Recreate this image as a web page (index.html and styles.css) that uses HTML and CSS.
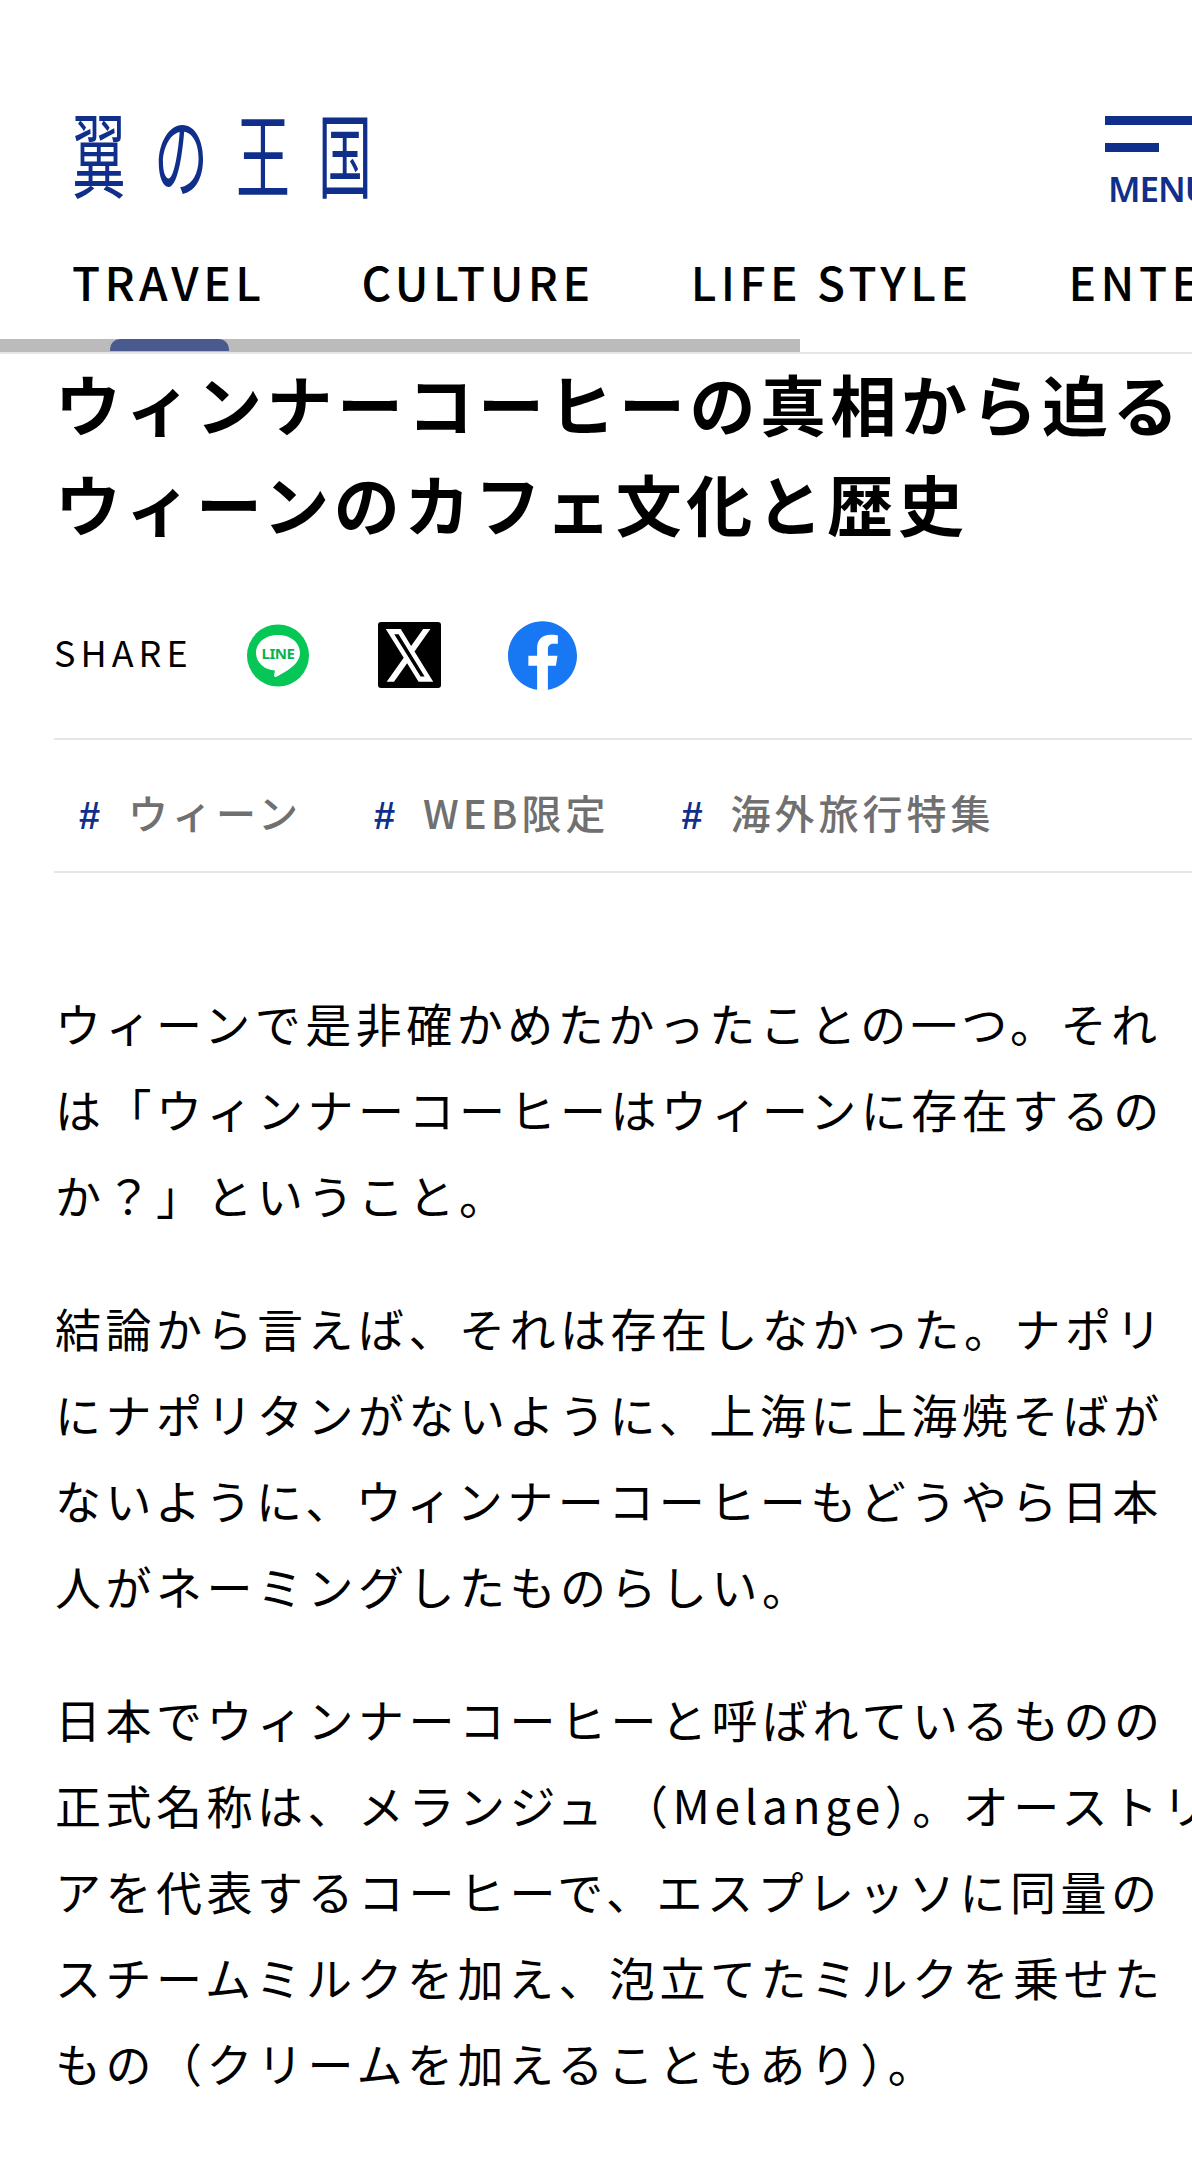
FILE: index.html
```html
<!DOCTYPE html>
<html lang="ja">
<head>
    <meta charset="UTF-8">
    <meta name="viewport" content="width=device-width, initial-scale=1.0">
    <title>ウィンナーコーヒーの真相から迫るウィーンのカフェ文化と歴史</title>
    <link rel="stylesheet" href="styles.css">
</head>
<body>

    <header class="site-header">
        <div class="logo-row">
            <a class="logo" href="#">翼の王国</a>
            <div class="menu-button">
                <span class="menu-bar"></span>
                <span class="menu-bar short"></span>
                <span class="menu-label">MENU</span>
            </div>
        </div>
        <nav class="main-nav">
            <a href="#">TRAVEL</a>
            <a href="#">CULTURE</a>
            <a href="#">LIFE STYLE</a>
            <a href="#">ENTERTAINMENT</a>
        </nav>
        <div class="nav-track"><span class="nav-thumb"></span></div>
    </header>

    <main class="article">
        <h1>ウィンナーコーヒーの真相から迫る<br>ウィーンのカフェ文化と歴史</h1>

        <div class="share">
            <span class="share-label">SHARE</span>
            <!-- LINE -->
            <a class="share-icon line" href="#">
                <svg viewBox="0 0 62 63" width="62" height="63">
                    <circle cx="31" cy="31.500" r="31" fill="#06c755"/>
                    <path d="M31 11C18.500 11 9 18.500 9 29c0 10 9 17 19 17.500l-1 5c0 1.500 1.500 1.800 3 1 5-3 23-11 23-23.500C53 18.500 43.500 11 31 11z" fill="#fff"/>
                    <text x="31" y="35" text-anchor="middle" class="line-text">LINE</text>
                </svg>
            </a>
            <!-- X -->
            <a class="share-icon x" href="#">
                <svg viewBox="0 0 63 66" width="63" height="66">
                    <rect width="63" height="66" rx="3" fill="#000"/>
                    <path transform="translate(5 1) scale(2.200 2.700)" d="M18.244 2.250h3.308l-7.227 8.260 8.502 11.240H16.170l-5.214-6.817L4.990 21.750H1.680l7.730-8.835L1.254 2.250H8.080l4.713 6.231zm-1.161 17.520h1.833L7.084 4.126H5.117z" fill="#fff"/>
                </svg>
            </a>
            <!-- Facebook -->
            <a class="share-icon fb" href="#">
                <svg viewBox="0 0 24 24" preserveAspectRatio="none" width="69" height="69">
                    <path d="M24 12.073c0-6.627-5.373-12-12-12s-12 5.373-12 12c0 5.990 4.388 10.954 10.125 11.854v-8.385H7.078v-3.470h3.047V9.430c0-3.007 1.792-4.669 4.533-4.669 1.312 0 2.686.235 2.686.235v2.953H15.830c-1.491 0-1.956.925-1.956 1.874v2.250h3.328l-.532 3.470h-2.796v8.385C19.612 23.027 24 18.062 24 12.073z" fill="#1877f2"/>
                </svg>
            </a>
        </div>

        <ul class="tags">
            <li><span class="hash">#</span><a href="#">ウィーン</a></li>
            <li><span class="hash">#</span><a href="#">WEB限定</a></li>
            <li><span class="hash">#</span><a href="#">海外旅行特集</a></li>
        </ul>

        <div class="article-body">
            <p>ウィーンで是非確かめたかったことの一つ。それ<br>は「ウィンナーコーヒーはウィーンに存在するの<br>か？」ということ。</p>
            <p>結論から言えば、それは存在しなかった。ナポリ<br>にナポリタンがないように、上海に上海焼そばが<br>ないように、ウィンナーコーヒーもどうやら日本<br>人がネーミングしたものらしい。</p>
            <p>日本でウィンナーコーヒーと呼ばれているものの<br>正式名称は、メランジュ （Melange）。オーストリ<br>アを代表するコーヒーで、エスプレッソに同量の<br>スチームミルクを加え、泡立てたミルクを乗せた<br>もの（クリームを加えることもあり）。</p>
        </div>
    </main>

</body>
</html>
```

FILE: styles.css
```css
html, body {
    margin: 0;
    padding: 0;
    background: #fff;
    overflow: hidden;
}

body {
    width: 1192px;
    height: 2177px;
    font-family: "Noto Sans CJK JP", "Noto Sans", sans-serif;
    color: #000;
}

a {
    color: inherit;
    text-decoration: none;
}

/* Header */
.site-header {
    padding-top: 116px;
    border-bottom: 2px solid #e6e6e6;
}

.logo-row {
    display: flex;
    justify-content: space-between;
    padding-left: 72px;
    height: 124px;
}

.logo {
    display: block;
    height: 84px;
    font-size: 54px;
    line-height: 84px;
    letter-spacing: 28px;
    color: #102f8a;
    font-weight: 400;
    white-space: nowrap;
    transform: translateY(-6px) scaleY(1.7);
    transform-origin: left center;
}

.menu-button {
    width: 87px;
    overflow: hidden;
}

.menu-bar {
    display: block;
    height: 9px;
    margin-bottom: 18px;
    background-color: #102f8a;
}

.menu-bar.short {
    width: 54px;
}

.menu-label {
    display: block;
    margin-left: 3px;
    font-family: "Noto Sans", sans-serif;
    font-size: 35px;
    line-height: 38px;
    font-weight: 600;
    letter-spacing: -1px;
    color: #102f8a;
    white-space: nowrap;
}

.main-nav {
    display: flex;
    gap: 96px;
    padding: 8px 0 0 72px;
    height: 91px;
    font-size: 46px;
    line-height: 66px;
    font-weight: 500;
    letter-spacing: 4.500px;
    white-space: nowrap;
}

.nav-track {
    width: 800px;
    height: 13px;
    background-color: #bbb;
    position: relative;
}

.nav-thumb {
    position: absolute;
    left: 110px;
    top: 0;
    width: 119px;
    height: 12px;
    background-color: #4a5a8f;
    border-radius: 10px 10px 0 0;
}

/* Article */
.article {
    padding-left: 55px;
    width: 1150px;
}

h1 {
    margin: -2px 0 0;
    font-size: 66px;
    line-height: 100px;
    font-weight: 700;
    letter-spacing: 4.500px;
    white-space: nowrap;
}

.share {
    display: flex;
    align-items: center;
    margin-top: 63px;
    margin-left: -1px;
    height: 80px;
}

.share-label {
    width: 193px;
    margin-bottom: 8px;
    font-size: 36px;
    letter-spacing: 5px;
}

.share-icon {
    display: block;
}

.share-icon svg {
    display: block;
}

.share-icon.line {
    width: 131px;
}

.share-icon.x {
    width: 130px;
}

.line-text {
    font-family: "Noto Sans", sans-serif;
    font-size: 15px;
    font-weight: 700;
    letter-spacing: -0.500px;
    fill: #06b350;
}

.tags {
    display: flex;
    list-style: none;
    margin: 43px 0 0 -1px;
    padding: 12px 0 0 25px;
    width: 1200px;
    height: 119px;
    align-items: center;
    gap: 72px;
    font-size: 40px;
    font-weight: 500;
    letter-spacing: 4px;
    color: #707070;
    border-top: 2px solid #e6e6e6;
    border-bottom: 2px solid #e6e6e6;
}

.tags .hash {
    display: inline-block;
    width: 49px;
    color: #102f8a;
    font-family: "Liberation Sans", sans-serif;
    font-size: 38px;
    font-weight: 700;
    letter-spacing: 0;
}

.article-body {
    margin-top: 106px;
    font-size: 46px;
    line-height: 86px;
    letter-spacing: 4.500px;
    white-space: nowrap;
}

.article-body p {
    margin: 0 0 47px;
}
```
